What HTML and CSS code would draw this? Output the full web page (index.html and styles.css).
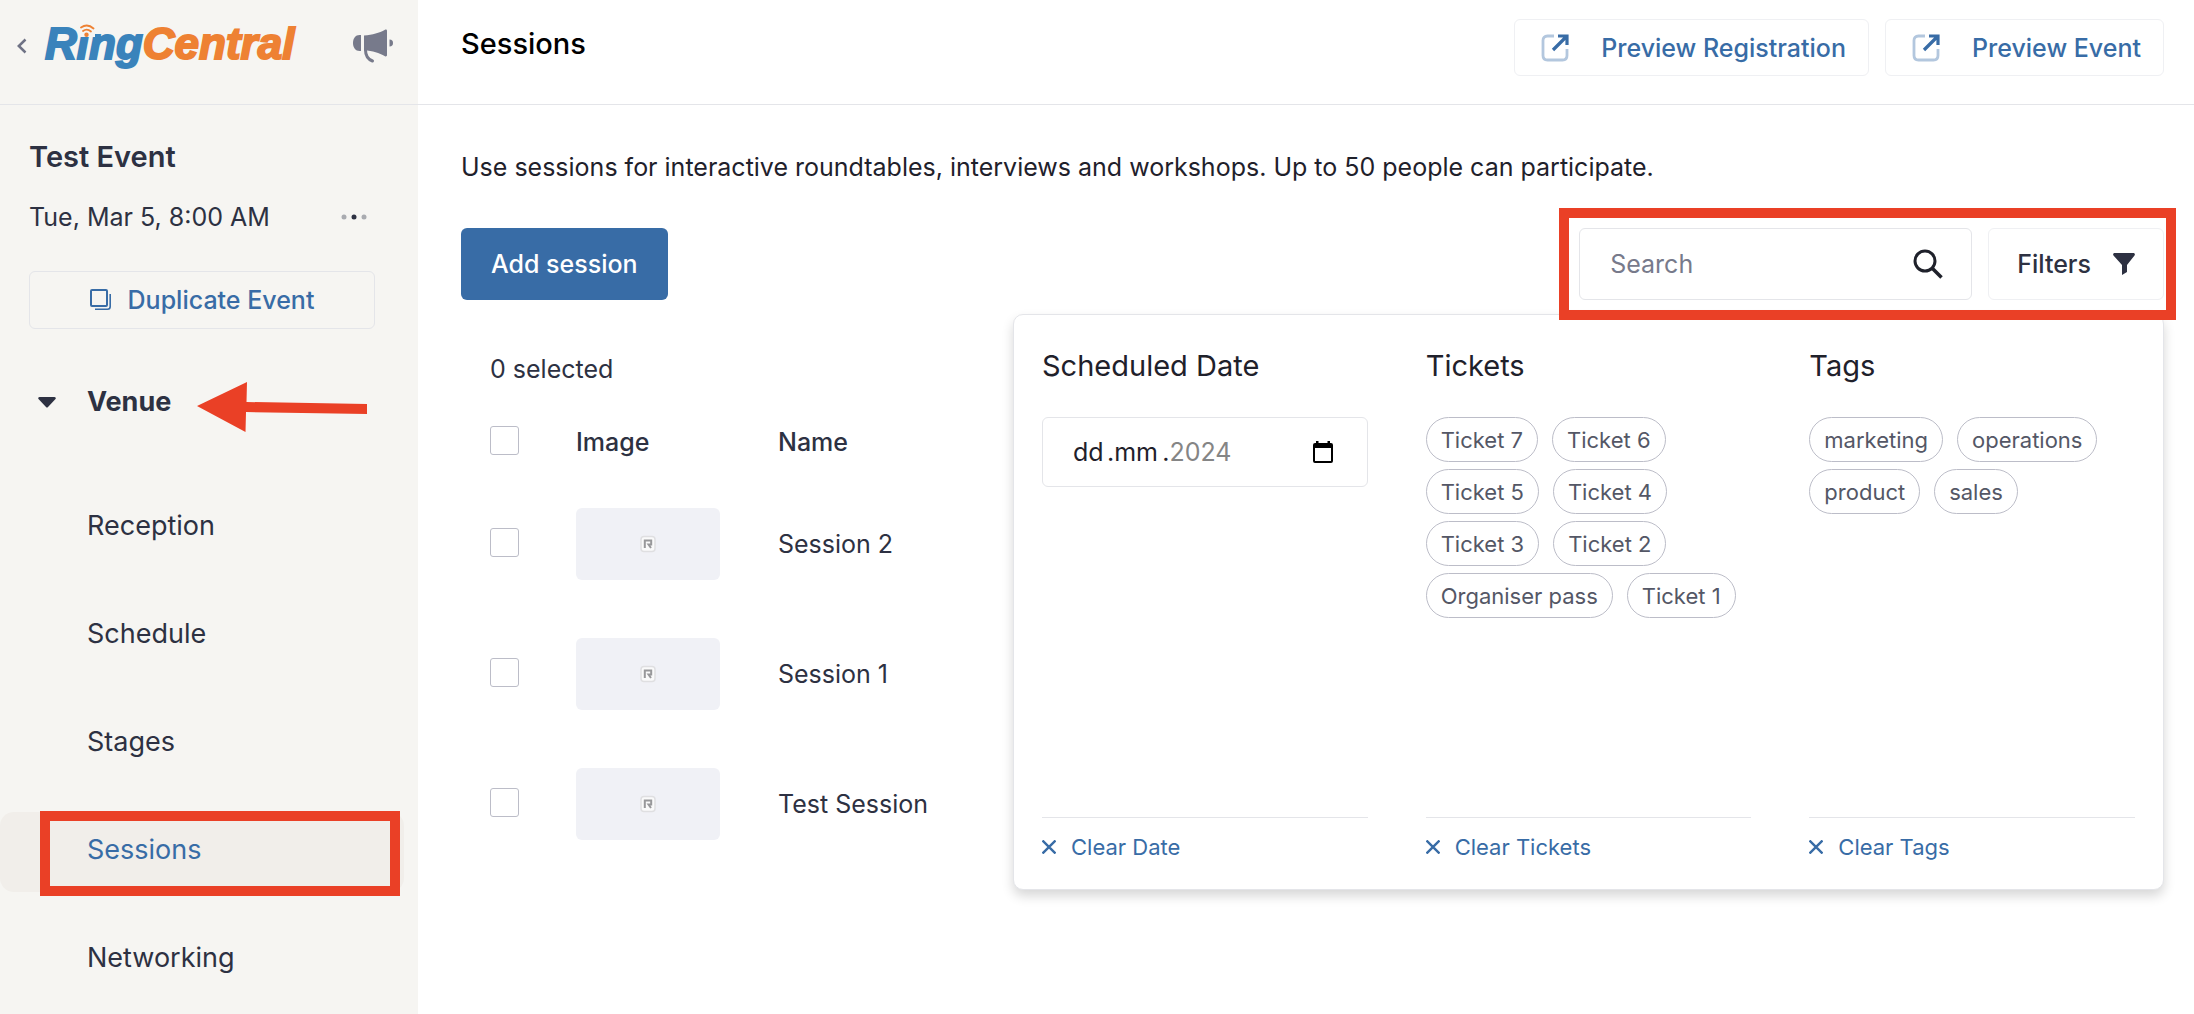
FILE: index.html
```html
<!DOCTYPE html>
<html lang="en">
<head>
  <meta charset="UTF-8" />
  <meta name="viewport" content="width=device-width, initial-scale=1.0"/>
  <title>Sessions</title>
  <link rel="stylesheet" href="styles.css">
</head>
<body>
  <aside class="sidebar">
    <div class="brand">
      <a href="#" class="back" aria-label="Back">
        <svg width="10" height="16" viewBox="0 0 10 16" fill="none" stroke="#6f7285" stroke-width="2.5"><path d="M8.500 1.500L1.800 8l6.700 6.500"/></svg>
      </a>
      <div class="logo">
        <span class="logo-ring">Ring</span><span class="logo-central">Central</span>
        <!-- signal waves in place of the dot of the "i" -->
        <svg class="logo-waves" width="16" height="13" viewBox="0 0 16 13">
          <rect width="16" height="13" fill="#f6f5f2"/>
          <g fill="none" stroke="#ee8133" stroke-width="1.8" stroke-linecap="round">
            <path d="M2 3.500Q8.500 -1 14.500 4.500"/>
            <path d="M4 7Q8 4 12 7.500"/>
          </g>
          <circle cx="7.500" cy="10.800" r="2.200" fill="#ee8133"/>
        </svg>
      </div>
      <button class="icon-button announce" aria-label="Announcements">
        <svg width="42" height="34" viewBox="0 0 42 34" fill="#777a8b">
          <path d="M9 6v16H7.500C3.500 22 1 18.500 1 14s2.500-8 6.500-8z"/>
          <path d="M12 6.500C21 6 27 4 33 .8c1-.5 2 0 2 1v24.400c0 1-1 1.500-2 1C27 24 21 21.500 12 21.500z"/>
          <path d="M37.500 10.500c2.500 0 3.500 1.500 3.500 3.500s-1 3.500-3.500 3.500z"/>
          <path d="M13.500 21c0 6 3 9.500 7 11" fill="none" stroke="#777a8b" stroke-width="3" stroke-linecap="round"/>
        </svg>
      </button>
    </div>

    <div class="event">
      <h2 class="event-title">Test Event</h2>
      <div class="event-date">
        <span>Tue, Mar 5, 8:00 AM</span>
        <button class="icon-button" aria-label="More">
          <svg width="26" height="6" viewBox="0 0 26 6"><circle cx="3" cy="3" r="2.500" fill="#a9abb0"/><circle cx="13" cy="3" r="2.500" fill="#2d3142"/><circle cx="23" cy="3" r="2.500" fill="#a9abb0"/></svg>
        </button>
      </div>
      <button class="duplicate">
        <svg width="22" height="22" viewBox="0 0 22 22" fill="none" stroke="#386ca6"><rect x="1" y="1" width="16" height="16" rx="1" stroke-width="2"/><path d="M20.200 5v12.500q0 2.700-2.700 2.700H5" stroke-width="1.600"/></svg>
        Duplicate Event
      </button>
    </div>

    <nav class="menu">
      <a href="#" class="menu-item menu-head">
        <svg class="caret" width="18" height="11" viewBox="0 0 18 11" fill="#2d3142"><path d="M1.500 0h15q2 .5 1 2L10 10q-1 1-2 0L.5 2q-1-1.500 1-2z"/></svg>
        Venue
        <svg class="arrow" width="170" height="50" viewBox="0 0 170 50" fill="#ea4026"><path d="M0 24L50 0l-.5 20L170 22v10L49 30l-.5 20z"/></svg>
      </a>
      <a href="#" class="menu-item">Reception</a>
      <a href="#" class="menu-item">Schedule</a>
      <a href="#" class="menu-item">Stages</a>
      <a href="#" class="menu-item active">Sessions<span class="mark mark-menu"></span></a>
      <a href="#" class="menu-item">Networking</a>
    </nav>
  </aside>

  <main class="main">
    <header class="topbar">
      <h1>Sessions</h1>
      <div class="top-actions">
        <a href="#" class="preview">
          <svg width="28" height="28" viewBox="0 0 28 28" fill="none"><path d="M13 2H6.500Q2 2 2 6.500v15Q2 26 6.500 26h15q4.500 0 4.500-4.500V15" stroke="#b3c7de" stroke-width="2.800"/><path d="M17 2h9v9M26 2L12 16" stroke="#386ca6" stroke-width="3.200"/></svg>
          Preview Registration
        </a>
        <a href="#" class="preview">
          <svg width="28" height="28" viewBox="0 0 28 28" fill="none"><path d="M13 2H6.500Q2 2 2 6.500v15Q2 26 6.500 26h15q4.500 0 4.500-4.500V15" stroke="#b3c7de" stroke-width="2.800"/><path d="M17 2h9v9M26 2L12 16" stroke="#386ca6" stroke-width="3.200"/></svg>
          Preview Event
        </a>
      </div>
    </header>

    <div class="content">
      <p class="intro">Use sessions for interactive roundtables, interviews and workshops. Up to 50 people can participate.</p>

      <div class="toolbar">
        <button class="add-button">Add session</button>
        <div class="search-group">
          <label class="search">
            <input type="text" placeholder="Search" aria-label="Search" />
            <svg width="30" height="30" viewBox="0 0 30 30" fill="none" stroke="#1f212b" stroke-width="3"><circle cx="12" cy="12" r="10"/><path d="M19.500 19.500l9 9" stroke-width="3.500"/></svg>
          </label>
          <button class="filters-button">
            Filters
            <svg width="22" height="22" viewBox="0 0 22 22" fill="#2d3142"><path d="M1 0h20q1.500 1 .5 2.500L14 12v7l-5 3V12L.5 2.500Q-.5 1 1 0z"/></svg>
          </button>
          <span class="mark mark-search"></span>

          <section class="panel">
            <div class="panel-column">
              <h3>Scheduled Date</h3>
              <div class="date-field">
                <input type="text" class="date-part" placeholder="dd" aria-label="Day" /><span>.</span><input type="text" class="date-part date-month" placeholder="mm" aria-label="Month" /><span>.</span><input type="text" class="date-part date-year" placeholder="2024" aria-label="Year" />
                <button class="icon-button calendar" aria-label="Pick a date">
                  <svg width="20" height="22" viewBox="0 0 20 22"><path d="M3 0h2.500v2h9V0H17v2h1q2 0 2 2v16q0 2-2 2H2q-2 0-2-2V4q0-2 2-2h1zM2 7v13h16V7z" fill="#000" fill-rule="evenodd"/></svg>
                </button>
              </div>
              <button class="clear"><svg width="14" height="14" viewBox="0 0 14 14" stroke="#386ca6" stroke-width="2.400"><path d="M.5.5l13 13M13.500.5l-13 13"/></svg>Clear Date</button>
            </div>
            <div class="panel-column">
              <h3>Tickets</h3>
              <div class="chips">
                <button class="chip">Ticket 7</button>
                <button class="chip">Ticket 6</button>
                <button class="chip">Ticket 5</button>
                <button class="chip">Ticket 4</button>
                <button class="chip">Ticket 3</button>
                <button class="chip">Ticket 2</button>
                <button class="chip">Organiser pass</button>
                <button class="chip">Ticket 1</button>
              </div>
              <button class="clear"><svg width="14" height="14" viewBox="0 0 14 14" stroke="#386ca6" stroke-width="2.400"><path d="M.5.5l13 13M13.500.5l-13 13"/></svg>Clear Tickets</button>
            </div>
            <div class="panel-column">
              <h3>Tags</h3>
              <div class="chips">
                <button class="chip">marketing</button>
                <button class="chip">operations</button>
                <button class="chip">product</button>
                <button class="chip">sales</button>
              </div>
              <button class="clear"><svg width="14" height="14" viewBox="0 0 14 14" stroke="#386ca6" stroke-width="2.400"><path d="M.5.5l13 13M13.500.5l-13 13"/></svg>Clear Tags</button>
            </div>
          </section>
        </div>
      </div>

      <p class="selected">0 selected</p>
      <table class="sessions">
        <thead>
          <tr>
            <th class="col-check"><input type="checkbox" aria-label="Select all" /></th>
            <th class="col-image">Image</th>
            <th>Name</th>
          </tr>
        </thead>
        <tbody>
          <tr>
            <td><input type="checkbox" id="session2" /></td>
            <td><div class="thumb"><svg width="16" height="18" viewBox="0 0 16 18"><rect x="1" y="1.500" width="14" height="15" rx="3" fill="#fafafa" stroke="#dfdfe1" stroke-width="1.500"/><path d="M4.800 13V5.500h6.400v4H8.500L11 13" fill="none" stroke="#98989a" stroke-width="2"/></svg></div></td>
            <td><label for="session2">Session 2</label></td>
          </tr>
          <tr>
            <td><input type="checkbox" id="session1" /></td>
            <td><div class="thumb"><svg width="16" height="18" viewBox="0 0 16 18"><rect x="1" y="1.500" width="14" height="15" rx="3" fill="#fafafa" stroke="#dfdfe1" stroke-width="1.500"/><path d="M4.800 13V5.500h6.400v4H8.500L11 13" fill="none" stroke="#98989a" stroke-width="2"/></svg></div></td>
            <td><label for="session1">Session 1</label></td>
          </tr>
          <tr>
            <td><input type="checkbox" id="testSession" /></td>
            <td><div class="thumb"><svg width="16" height="18" viewBox="0 0 16 18"><rect x="1" y="1.500" width="14" height="15" rx="3" fill="#fafafa" stroke="#dfdfe1" stroke-width="1.500"/><path d="M4.800 13V5.500h6.400v4H8.500L11 13" fill="none" stroke="#98989a" stroke-width="2"/></svg></div></td>
            <td><label for="testSession">Test Session</label></td>
          </tr>
        </tbody>
      </table>
    </div>
  </main>
</body>
</html>
```
FILE: styles.css
```css
* { box-sizing: border-box; }
body {
  font-family: Inter, sans-serif;
  font-size: 25px;
  line-height: 32px;
  margin: 0;
  color: #2d3142;
  background-color: #fff;
  display: flex;
  min-height: 100vh;
}
h1, h2, h3, p { margin: 0; font-weight: 400; }
a { color: inherit; text-decoration: none; }
button, input {
  font: inherit;
  color: inherit;
  margin: 0;
}
button { cursor: pointer; }
svg { display: block; flex: none; }
.icon-button {
  display: flex;
  padding: 0;
  border: none;
  background: none;
}

/* sidebar */
.sidebar {
  width: 418px;
  flex: none;
  background-color: #f6f5f2;
}
.brand {
  display: flex;
  align-items: center;
  height: 105px;
  padding: 0 24px 12px 17px;
  border-bottom: 1px solid #e4e5e9;
}
.back { margin-right: 18px; }
.logo {
  position: relative;
  padding-bottom: 4px;
  font-family: "Liberation Sans", sans-serif;
  font-size: 44px;
  font-weight: bold;
  font-style: italic;
  line-height: 50px;
}
.logo-ring {
  color: #3a83bb;
  -webkit-text-stroke: 2px #3a83bb;
}
.logo-central {
  color: #ee8133;
  -webkit-text-stroke: 2px #ee8133;
}
.logo-waves {
  position: absolute;
  left: 34px;
  top: 5px;
}
.announce { margin-left: auto; }
.event { padding: 36px 43px 0 29px; }
.event-title {
  font-size: 29px;
  font-weight: 600;
}
.event-date {
  display: flex;
  align-items: center;
  justify-content: space-between;
  margin-top: 28px;
  padding-right: 8px;
}
.duplicate {
  display: flex;
  align-items: center;
  justify-content: center;
  gap: 16px;
  width: 100%;
  height: 58px;
  margin-top: 38px;
  border: 1px solid #e4e5e9;
  border-radius: 6px;
  background: none;
  color: #386ca6;
  font-weight: 500;
}
.menu {
  display: flex;
  flex-direction: column;
  gap: 28px;
  padding: 35px 14px 0 0;
}
.menu-item {
  position: relative;
  display: flex;
  align-items: center;
  height: 80px;
  padding: 0 0 4px 87px;
  border-radius: 14px;
  font-size: 27px;
}
.menu-head {
  margin-bottom: 16px;
  font-weight: 700;
}
.caret {
  position: absolute;
  left: 38px;
}
.arrow {
  position: absolute;
  left: 197px;
  top: 18px;
}
.active {
  background-color: #f1eeea;
  color: #386ca6;
}
.mark {
  position: absolute;
  border: 10px solid #ea4026;
  pointer-events: none;
}
.mark-menu {
  left: 40px;
  right: 4px;
  top: -1px;
  bottom: -4px;
}

/* main column */
.main { flex: 1; }
.topbar {
  display: flex;
  align-items: center;
  justify-content: space-between;
  height: 105px;
  padding: 0 30px 10px 43px;
  border-bottom: 1px solid #e4e5e9;
}
.topbar h1 {
  padding-bottom: 6px;
  font-size: 29px;
  font-weight: 500;
  color: #000;
}
.top-actions {
  display: flex;
  gap: 16px;
}
.preview {
  display: flex;
  align-items: center;
  gap: 32px;
  height: 57px;
  padding: 1px 22px 0 26px;
  border: 1px solid #eff0f3;
  border-radius: 6px;
  color: #386ca6;
  font-weight: 500;
}
.content { padding: 46px 30px 0 43px; }
.intro { color: #1f212b; }
.toolbar {
  display: flex;
  justify-content: space-between;
  margin-top: 45px;
}
.add-button {
  height: 72px;
  padding: 0 30px;
  border: none;
  border-radius: 6px;
  background-color: #386ca6;
  color: #fff;
  font-weight: 500;
}
.search-group {
  position: relative;
  display: flex;
  gap: 16px;
}
.search {
  display: flex;
  align-items: center;
  width: 393px;
  height: 72px;
  padding: 0 28px 0 30px;
  border: 1px solid #e4e5e9;
  border-radius: 6px;
}
.search input {
  flex: 1;
  min-width: 0;
  padding: 0;
  border: none;
  outline: none;
  background: none;
}
.search input::placeholder { color: #777a8b; }
.filters-button {
  display: flex;
  align-items: center;
  gap: 22px;
  padding: 0 28px;
  border: 1px solid #eff0f3;
  border-radius: 6px;
  background: none;
  font-weight: 500;
}
.mark-search {
  left: -20px;
  right: -12px;
  top: -20px;
  bottom: -20px;
  z-index: 2;
}

/* filters drop-down */
.panel {
  position: absolute;
  top: 86px;
  right: 0;
  z-index: 1;
  display: grid;
  grid-template-columns: repeat(3, 1fr);
  gap: 58px;
  width: 1151px;
  min-height: 576px;
  padding: 28px;
  border: 1px solid #e4e5e9;
  border-radius: 10px;
  background-color: #fff;
  box-shadow: 0 6px 12px rgba(0,0,0,0.16);
}
.panel-column {
  display: flex;
  flex-direction: column;
}
.panel h3 {
  height: 46px;
  margin-bottom: 28px;
  font-size: 29px;
  line-height: 46px;
  color: #1f212b;
}
.date-field {
  display: flex;
  align-items: center;
  height: 70px;
  padding: 0 34px 0 30px;
  border: 1px solid #e4e5e9;
  border-radius: 6px;
  color: #1f212b;
}
.date-part {
  width: 34px;
  padding: 0;
  border: none;
  outline: none;
  background: none;
}
.date-part::placeholder { color: #1f212b; }
.date-month { width: 48px; }
.date-year { width: 70px; }
.date-year::placeholder { color: #858585; }
.calendar { margin-left: auto; }
.chips {
  display: flex;
  flex-wrap: wrap;
  gap: 7px 14px;
}
.chip {
  height: 45px;
  padding: 0 14px;
  border: 1px solid #bcbdc8;
  border-radius: 23px;
  background: none;
  color: #545766;
  font-size: 22px;
  line-height: 28px;
}
.clear {
  display: flex;
  align-items: center;
  gap: 15px;
  margin-top: auto;
  padding: 15px 0 0;
  border: none;
  border-top: 1px solid #e4e5e9;
  background: none;
  color: #386ca6;
  font-size: 22px;
  line-height: 28px;
}

/* sessions table */
.selected {
  margin: 53px 0 0 29px;
}
.sessions {
  margin: 20px 0 0 29px;
  border-collapse: collapse;
}
.sessions th {
  height: 74px;
  padding: 0;
  font-weight: 500;
  text-align: left;
}
.sessions td {
  height: 130px;
  padding: 0;
}
.col-check { width: 86px; }
.col-image { width: 202px; }
.sessions input {
  display: block;
  width: 29px;
  height: 29px;
  margin-bottom: 3px;
  border: 1px solid #bcbdc8;
  border-radius: 3px;
  background-color: #fff;
  appearance: none;
}
.sessions input:checked { background-color: #386ca6; }
.thumb {
  display: flex;
  align-items: center;
  justify-content: center;
  width: 144px;
  height: 72px;
  border-radius: 6px;
  background-color: #f0f1f6;
}
```
